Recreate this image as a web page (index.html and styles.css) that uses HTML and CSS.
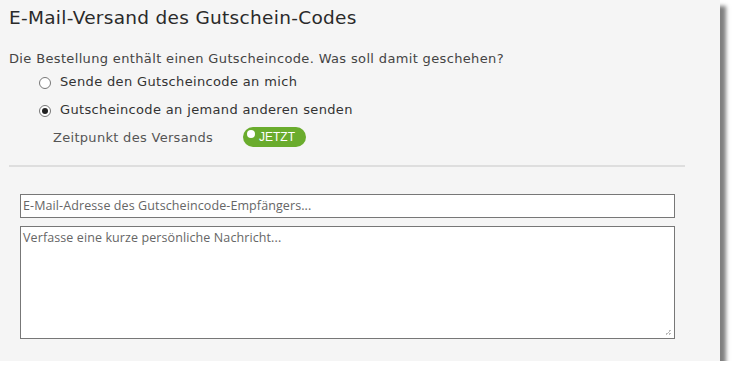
FILE: index.html
```html
<!DOCTYPE html>
<html lang="de">
<head>
<meta charset="utf-8">
<title>E-Mail-Versand des Gutschein-Codes</title>
<link rel="stylesheet" href="styles.css">
</head>
<body>
<div class="panel">
  <h1 class="title">E-Mail-Versand des Gutschein-Codes</h1>
  <p class="question">Die Bestellung enthält einen Gutscheincode. Was soll damit geschehen?</p>
  <label class="option"><span class="radio"></span>Sende den Gutscheincode an mich</label>
  <label class="option"><span class="radio checked"></span>Gutscheincode an jemand anderen senden</label>
  <div class="when">
    <span class="when-label">Zeitpunkt des Versands</span>
    <span class="toggle"><span class="knob"></span>JETZT</span>
  </div>
  <hr class="divider">
  <div class="fields">
    <div class="field">E-Mail-Adresse des Gutscheincode-Empfängers...</div>
    <div class="field area">Verfasse eine kurze persönliche Nachricht...<span class="grip"></span></div>
  </div>
</div>
</body>
</html>
```

FILE: styles.css
```css
* {
    margin: 0;
    padding: 0;
    box-sizing: border-box;
}
body {
    background: #fff;
    font-family: "DejaVu Sans", "Noto Sans", sans-serif;
    color: #333;
}
.panel {
    width: 720px;
    height: 361px;
    background: #f5f5f5;
    box-shadow: 6px 6px 4px rgba(0,0,0,.5);
    padding-top: 5px;
}
.title {
    font-weight: normal;
    font-size: 18.5px;
    letter-spacing: .3px;
    color: #2a2a2a;
    margin-left: 9px;
    line-height: 26px;
}
.question {
    font-size: 13px;
    letter-spacing: .35px;
    margin: 19px 0 0 9px;
    line-height: 18px;
    color: #444;
}
.option {
    display: flex;
    align-items: center;
    margin-left: 39px;
    font-size: 13px;
    letter-spacing: .35px;
    color: #333;
    height: 28px;
}
.option:first-of-type {
    margin-top: -1px;
}
.radio {
    width: 12px;
    height: 12px;
    border: 1px solid #777;
    border-radius: 50%;
    background: #fff;
    margin-right: 9px;
    position: relative;
    top: 2px;
}
.radio.checked::after {
    content: "";
    position: absolute;
    left: 2px;
    top: 2px;
    width: 6px;
    height: 6px;
    border-radius: 50%;
    background: #222;
}
.when {
    display: flex;
    align-items: center;
    margin-left: 53px;
    height: 28px;
    font-size: 13px;
    letter-spacing: .3px;
    color: #555;
}
.when-label {
    width: 190px;
}
.toggle {
    position: relative;
    display: inline-flex;
    align-items: center;
    height: 20px;
    width: 63px;
    border-radius: 10px;
    background: #6aac2d;
    color: #fff;
    font-family: "Liberation Sans", Arial, sans-serif;
    font-size: 12px;
    letter-spacing: 0;
    padding-left: 16px;
}
.knob {
    position: absolute;
    left: 4px;
    top: 3px;
    width: 8px;
    height: 8px;
    border-radius: 50%;
    background: #fff;
}
.divider {
    border: 0;
    height: 2px;
    background: #dedede;
    width: 676px;
    margin: 14px 0 0 9px;
}
.fields {
    padding: 27px 0 0 20px;
    display: flex;
    flex-direction: column;
    gap: 8px;
}
.field {
    width: 655px;
    height: 24px;
    border: 1px solid #777;
    background: #fff;
    font-family: "Open Sans", sans-serif;
    font-size: 12.5px;
    letter-spacing: .1px;
    color: #666;
    padding: 2px 0 0 2px;
}
.field.area {
    height: 113px;
    position: relative;
}
.grip {
    position: absolute;
    right: 3px;
    bottom: 3px;
    width: 6px;
    height: 6px;
    background: linear-gradient(135deg, transparent 50%, #bbb 50%, #bbb 60%, transparent 60%, transparent 75%, #bbb 75%, #bbb 85%, transparent 85%);
}
```
